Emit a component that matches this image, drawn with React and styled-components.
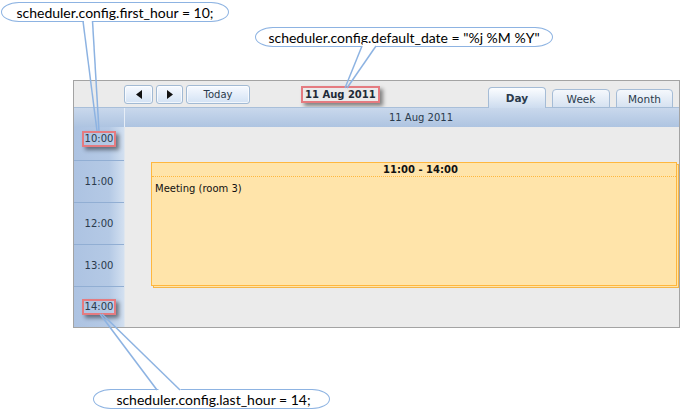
import React from 'react';
import styled, { createGlobalStyle } from 'styled-components';

const Global = createGlobalStyle`
  html, body { margin: 0; padding: 0; background: #fff; }
  body { width: 680px; height: 411px; overflow: hidden; font-family: "DejaVu Sans", "Liberation Sans", sans-serif; }
  * { box-sizing: border-box; }
`;

const Page = styled.div`
  position: relative;
  width: 680px;
  height: 411px;
  padding: 80px 0 0 73px;
`;

const Scheduler = styled.div`
  width: 607px;
  height: 248px;
  border: 1px solid #a3a3a3;
  background: #ebebeb;
  display: flex;
  flex-direction: column;
  color: #2a3a4c;
`;

const NavBar = styled.div`
  height: 26px;
  display: flex;
  align-items: center;
  padding: 0 6px 0 50px;
  background: #ebebeb;
`;

const NavButtons = styled.div`
  display: flex;
  gap: 3px;
`;

const NavButton = styled.div`
  width: ${p => p.$w}px;
  height: 19px;
  border: 1px solid #a2bad4;
  border-radius: 3px;
  background: linear-gradient(#f7faff, #d3e2f4);
  box-shadow: inset 0 0 0 1px rgba(255,255,255,0.7);
  display: flex;
  align-items: center;
  justify-content: center;
  font-size: 10px;
  color: #2a3a4c;
`;

const Highlight = styled.span`
  display: inline-block;
  border: 2px solid #e57b80;
  padding: ${p => p.$pad || '0 1px'};
  box-shadow: 3px 3px 4px rgba(0, 0, 0, 0.45);
  line-height: ${p => p.$lh || 12}px;
`;

const NavDate = styled.div`
  margin-left: 51px;
  font-size: 10px;
  font-weight: bold;
  color: #1f2b38;
  align-self: center;
  margin-top: 1px;
`;

const Tabs = styled.div`
  margin-left: auto;
  align-self: flex-end;
  display: flex;
  align-items: flex-end;
  gap: 6px;
  margin-bottom: -1px;
  position: relative;
  z-index: 1;
`;

const Tab = styled.div`
  width: ${p => p.$w}px;
  height: ${p => (p.$active ? 21 : 19)}px;
  border: 1px solid #a5bcd6;
  border-bottom: ${p => (p.$active ? 'none' : '1px solid #a5bcd6')};
  border-radius: 4px 4px 0 0;
  background: ${p => (p.$active ? 'linear-gradient(#fbfdff, #cddcef)' : 'linear-gradient(#f5f8fc, #d6e2f1)')};
  display: flex;
  align-items: center;
  justify-content: center;
  font-size: 10.5px;
  font-weight: ${p => (p.$active ? 'bold' : 'normal')};
  color: #2a3a4c;
  padding-top: ${p => (p.$active ? 0 : 1)}px;
`;

const HeaderRow = styled.div`
  height: 20px;
  display: flex;
  border-top: 1px solid #a9bfd9;
  background: linear-gradient(#c9d8ec, #aec4e1);
`;

const HeaderCorner = styled.div`
  width: 51px;
  border-right: 1px solid #e6edf6;
`;

const HeaderDate = styled.div`
  flex: 1;
  display: flex;
  align-items: center;
  justify-content: center;
  padding-left: 38px;
  font-size: 10px;
  color: #2a3a4c;
`;

const Body = styled.div`
  flex: 1;
  display: flex;
  min-height: 0;
`;

const TimeColumn = styled.div`
  width: 51px;
  display: flex;
  flex-direction: column;
  background: linear-gradient(90deg, #adc3e2 0%, #b4c9e5 70%, #d3e0f0 100%);
  border-right: 1px solid #dfe6ee;
`;

const HourCell = styled.div`
  height: ${p => p.$h}px;
  display: flex;
  justify-content: center;
  align-items: ${p => (p.$top ? 'flex-start' : 'center')};
  padding-top: ${p => p.$pt || 0}px;
  border-top: ${p => (p.$first ? 'none' : '1px solid #91aed3')};
  font-size: 10px;
  color: #2a3a4c;
`;

const Content = styled.div`
  flex: 1;
  position: relative;
  isolation: isolate;
  background: #ebebeb;
`;

const Event = styled.div`
  position: absolute;
  left: 26px;
  top: 35px;
  width: 526px;
  height: 124px;
  background: #ffe4aa;
  border: 1px solid #ffb73e;
  display: flex;
  flex-direction: column;
  &::after {
    content: '';
    position: absolute;
    left: 1px;
    top: 1px;
    right: -3px;
    bottom: -3px;
    background: #ffe4aa;
    border: 1px solid #f6b548;
    z-index: -1;
  }
`;

const EventHead = styled.div`
  height: 14px;
  border-bottom: 1px dotted #ffb73e;
  display: flex;
  align-items: center;
  justify-content: center;
  padding-left: 13px;
  font-size: 10px;
  font-weight: bold;
  color: #111;
`;

const EventBody = styled.div`
  padding: 6px 3px;
  font-size: 10px;
  color: #111;
`;

const Bubble = styled.div`
  position: absolute;
  left: ${p => p.$x}px;
  top: ${p => p.$y}px;
  width: ${p => p.$w}px;
  height: ${p => p.$h}px;
  border: 1.5px solid #8db3e2;
  border-radius: 18px / 10px;
  background: #fff;
  display: flex;
  align-items: center;
  justify-content: center;
  padding-left: ${p => p.$pl || 0}px;
  font-family: Lato, "Open Sans", sans-serif;
  font-size: 14px;
  color: #000;
  white-space: nowrap;
`;

const Tails = styled.svg`
  position: absolute;
  left: 0;
  top: 0;
  pointer-events: none;
`;

const Arrow = ({ dir }) => (
  <svg width="6" height="9" viewBox="0 0 6 9">
    {dir === 'left' ? <polygon points="6,0 6,9 0,4.5" fill="#111" /> : <polygon points="0,0 0,9 6,4.5" fill="#111" />}
  </svg>
);

const Tail = ({ cover, a, b }) => (
  <g>
    <polygon points={cover} fill="#fff" />
    <line x1={a[0]} y1={a[1]} x2={a[2]} y2={a[3]} stroke="#8db3e2" strokeWidth="1.5" />
    <line x1={b[0]} y1={b[1]} x2={b[2]} y2={b[3]} stroke="#8db3e2" strokeWidth="1.5" />
  </g>
);

export default function App() {
  const hours = [
    { label: '10:00', h: 33, first: true, top: true, pt: 4, hl: true },
    { label: '11:00', h: 42 },
    { label: '12:00', h: 42 },
    { label: '13:00', h: 42 },
    { label: '14:00', h: 41, hl: true },
  ];
  return (
    <>
      <Global />
      <Page>
        <Scheduler>
          <NavBar>
            <NavButtons>
              <NavButton $w={29}><Arrow dir="left" /></NavButton>
              <NavButton $w={27}><Arrow dir="right" /></NavButton>
              <NavButton $w={64}>Today</NavButton>
            </NavButtons>
            <NavDate>
              <Highlight $pad="0 2px" $lh={13}>11 Aug 2011</Highlight>
            </NavDate>
            <Tabs>
              <Tab $w={58} $active>Day</Tab>
              <Tab $w={58}>Week</Tab>
              <Tab $w={57}>Month</Tab>
            </Tabs>
          </NavBar>
          <HeaderRow>
            <HeaderCorner />
            <HeaderDate>11 Aug 2011</HeaderDate>
          </HeaderRow>
          <Body>
            <TimeColumn>
              {hours.map(h => (
                <HourCell key={h.label} $h={h.h} $first={h.first} $top={h.top} $pt={h.pt}>
                  {h.hl ? <Highlight>{h.label}</Highlight> : h.label}
                </HourCell>
              ))}
            </TimeColumn>
            <Content>
              <Event>
                <EventHead>11:00 - 14:00</EventHead>
                <EventBody>Meeting (room 3)</EventBody>
              </Event>
            </Content>
          </Body>
        </Scheduler>

        <Bubble $x={1} $y={2} $w={228} $h={20}>scheduler.config.first_hour = 10;</Bubble>
        <Bubble $x={255} $y={27} $w={298} $h={20}>scheduler.config.default_date = "%j %M %Y"</Bubble>
        <Bubble $x={93} $y={389} $w={237} $h={20} $pl={4}>scheduler.config.last_hour = 14;</Bubble>

        <Tails width="680" height="411" viewBox="0 0 680 411">
          <Tail cover="83.5,18 92,18 92.6,24 84.3,24" a={[83, 21, 97, 131]} b={[92.5, 21, 99, 131]} />
          <Tail cover="363,43 376,43 375,49 361.5,49" a={[362, 46, 345, 88]} b={[376, 46, 347, 88]} />
          <Tail cover="157,386 179,386 182,393 160,393" a={[100, 314, 157, 390]} b={[102, 314, 180, 390]} />
        </Tails>
      </Page>
    </>
  );
}
